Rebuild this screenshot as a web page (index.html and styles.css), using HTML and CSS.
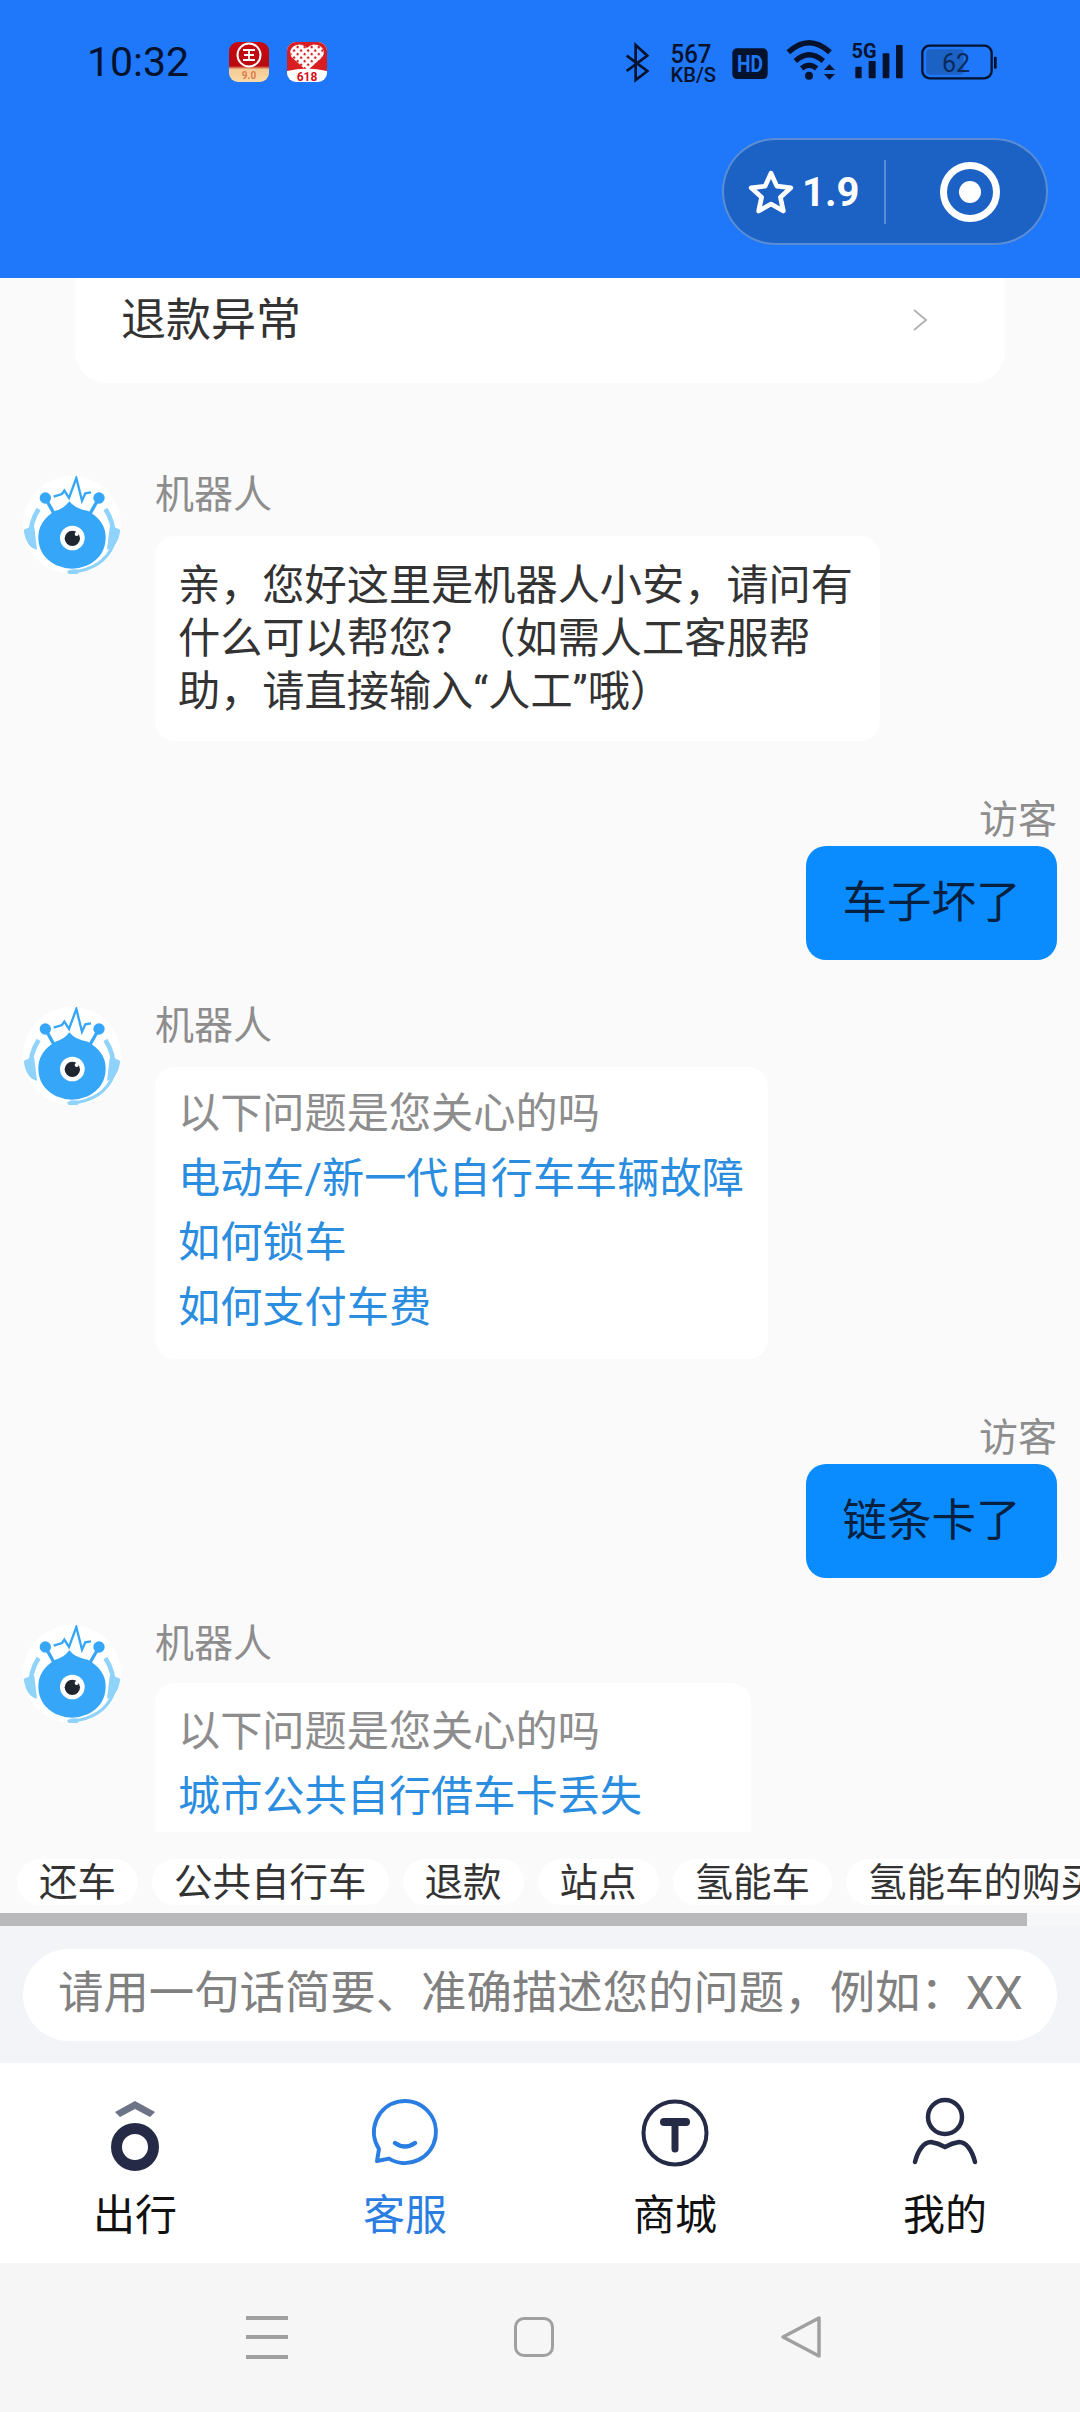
FILE: index.html
```html
<!DOCTYPE html>
<html lang="zh-CN">
<head>
    <meta charset="UTF-8">
    <title>客服</title>
    <link rel="stylesheet" href="styles.css">
</head>
<body>
<svg class="defs" width="0" height="0">
    <symbol id="bot" viewBox="68 106 294 294">
        <circle cx="215" cy="253" r="147" fill="#fff"/>
        <path d="M115 205Q88 245 90 300" fill="none" stroke="#8fd3fb" stroke-width="14"/>
        <path d="M70 268Q90 256 102 260L110 327Q78 322 70 268Z" fill="#8fd3fb"/>
        <path d="M315 205Q342 245 340 300" fill="none" stroke="#8fd3fb" stroke-width="14"/>
        <path d="M360 268Q340 256 328 260L320 327Q352 322 360 268Z" fill="#8fd3fb"/>
        <path d="M340 310Q310 385 215 394" fill="none" stroke="#8fd3fb" stroke-width="10"/>
        <path d="M200 392Q215 382 235 388L232 402H206Z" fill="#8fd3fb"/>
        <path d="M135 172L165 226M296 172L265 226" stroke="#36a6f8" stroke-width="10"/>
        <circle cx="135" cy="172" r="17" fill="#36a6f8"/>
        <circle cx="296" cy="172" r="17" fill="#36a6f8"/>
        <path d="M160 168L185 160L192 150L206 172L228 112L245 180L255 158L272 155" fill="none" stroke="#36a6f8" stroke-width="7"/>
        <path d="M207 182Q225 205 262 210Q316 240 316 290Q316 347 262 374Q215 394 168 374Q114 347 114 290Q114 240 165 210Q190 205 207 182Z" fill="#36a6f8"/>
        <circle cx="216" cy="292" r="37" fill="#fff"/>
        <circle cx="216" cy="293" r="23" fill="#20262f"/>
        <circle cx="229" cy="280" r="6" fill="#fff"/>
    </symbol>
</svg>

<div class="page">
    <header class="header">
        <div class="status">
            <span class="time">10:32</span>
            <svg class="app" viewBox="0 0 40 40" width="40" height="40">
                <defs>
                    <linearGradient id="icbc" x1="0" y1="0" x2="0" y2="1">
                        <stop offset="0" stop-color="#c8090f"/>
                        <stop offset=".6" stop-color="#b80a10"/>
                        <stop offset=".68" stop-color="#f5cb93"/>
                        <stop offset="1" stop-color="#f8d9a8"/>
                    </linearGradient>
                    <pattern id="pdd" width="5" height="5" patternUnits="userSpaceOnUse" patternTransform="rotate(45)">
                        <rect width="2.2" height="2.2" fill="#d91e22"/>
                    </pattern>
                </defs>
                <rect width="40" height="40" rx="9" fill="url(#icbc)"/>
                <circle cx="20" cy="13" r="11.5" fill="none" stroke="#fff" stroke-width="2"/>
                <path d="M14 8H26M20 8V18M15 13H25M14 18H26" stroke="#fff" stroke-width="1.8" fill="none"/>
                <text x="20" y="37" class="app-text" fill="#dd7a4c" font-size="10">9.0</text>
            </svg>
            <svg class="app app-last" viewBox="0 0 40 40" width="40" height="40">
                <rect width="40" height="40" rx="9" fill="#fff"/>
                <path d="M0 9A9 9 0 0 1 9 0H31A9 9 0 0 1 40 9V29Q20 24 0 29Z" fill="#d91e22"/>
                <path d="M20 29L4.5 15Q1 8 7 4Q14 0 20 6Q26 0 33 4Q39 8 35.5 15Z" fill="#fff"/>
                <path d="M20 29L4.5 15Q1 8 7 4Q14 0 20 6Q26 0 33 4Q39 8 35.5 15Z" fill="url(#pdd)"/>
                <text x="20" y="38.5" class="app-text" fill="#d3101c" font-size="12">618</text>
            </svg>
            <svg class="sys" viewBox="0 0 390 55" width="390" height="55">
                <g transform="scale(.33333)">
                    <path d="M20 62L82 108L47 135V30L82 62L20 108" fill="none" stroke="#04122e" stroke-width="8"/>
                    <rect x="337" y="40" width="106" height="92" rx="14" fill="#04122e"/>
                    <path d="M505 52Q567 -5 630 52M526 78Q567 40 610 78M545 100Q567 82 590 100" fill="none" stroke="#04122e" stroke-width="16"/>
                    <circle cx="567" cy="122" r="12" fill="#04122e"/>
                    <path d="M612 105L628 88L645 105ZM612 117H645L628 134Z" fill="#04122e"/>
                    <rect x="706" y="95" width="19" height="35" rx="3" fill="#04122e"/>
                    <rect x="746" y="78" width="21" height="52" rx="3" fill="#04122e"/>
                    <rect x="788" y="55" width="20" height="75" rx="3" fill="#04122e"/>
                    <rect x="828" y="30" width="20" height="100" rx="3" fill="#04122e"/>
                    <rect x="907" y="32" width="208" height="98" rx="22" fill="none" stroke="#04122e" stroke-width="7"/>
                    <rect x="919" y="43" width="112" height="76" rx="10" fill="#1b62c4"/>
                    <rect x="1122" y="65" width="8" height="36" rx="3" fill="#04122e"/>
                </g>
                <text x="50.5" y="28.3" class="sys-text" font-size="25" textLength="41" lengthAdjust="spacingAndGlyphs">567</text>
                <text x="50.5" y="46.7" class="sys-text" font-size="19.5" textLength="45.5" lengthAdjust="spacingAndGlyphs">KB/S</text>
                <text x="117" y="37" class="sys-text hd" font-size="23" textLength="26" lengthAdjust="spacingAndGlyphs">HD</text>
                <text x="231.5" y="23" class="sys-text bold" font-size="19.5" textLength="25" lengthAdjust="spacingAndGlyphs">5G</text>
                <text x="322" y="36.5" class="sys-text batt" font-size="25">62</text>
            </svg>
        </div>
        <div class="capsule">
            <div class="rate">
                <svg viewBox="0 0 44 42" width="46" height="44">
                    <path d="M22 3L27.6 15.4L41 16.9L31 26L33.8 39.2L22 32.5L10.2 39.2L13 26L3 16.9L16.4 15.4Z" fill="none" stroke="#fff" stroke-width="4.5" stroke-linejoin="round"/>
                </svg>
                <span>1.9</span>
            </div>
            <i class="capsule-line"></i>
            <svg class="capsule-dot" viewBox="0 0 60 60" width="60" height="60">
                <circle cx="30" cy="30" r="26.5" fill="none" stroke="#fff" stroke-width="7"/>
                <circle cx="30" cy="30" r="11" fill="#fff"/>
            </svg>
        </div>
    </header>

    <main class="chat">
        <div class="card">
            <span>退款异常</span>
            <svg viewBox="0 0 16 22" width="16" height="22">
                <path d="M2 1L14 11L2 21" fill="none" stroke="#b4b4b4" stroke-width="2"/>
            </svg>
        </div>

        <div class="msg">
            <svg class="avatar" width="98" height="98"><use href="#bot"/></svg>
            <div>
                <p class="name">机器人</p>
                <div class="bubble bubble-first">亲，您好这里是机器人小安，请问有什么可以帮您？（如需人工客服帮助，请直接输入“人工”哦）</div>
            </div>
        </div>

        <div class="msg-me">
            <p class="name">访客</p>
            <div class="bubble-me">车子坏了</div>
        </div>

        <div class="msg">
            <svg class="avatar" width="98" height="98"><use href="#bot"/></svg>
            <div>
                <p class="name">机器人</p>
                <div class="bubble bubble-list">
                    <p class="tip">以下问题是您关心的吗</p>
                    <a class="link">电动车/新一代自行车车辆故障</a>
                    <a class="link">如何锁车</a>
                    <a class="link">如何支付车费</a>
                </div>
            </div>
        </div>

        <div class="msg-me">
            <p class="name">访客</p>
            <div class="bubble-me">链条卡了</div>
        </div>

        <div class="msg">
            <svg class="avatar" width="98" height="98"><use href="#bot"/></svg>
            <div>
                <p class="name">机器人</p>
                <div class="bubble bubble-list bubble-last">
                    <p class="tip">以下问题是您关心的吗</p>
                    <a class="link">城市公共自行借车卡丢失</a>
                </div>
            </div>
        </div>
    </main>

    <div class="chips">
        <span class="chip">还车</span>
        <span class="chip">公共自行车</span>
        <span class="chip">退款</span>
        <span class="chip">站点</span>
        <span class="chip">氢能车</span>
        <span class="chip">氢能车的购买</span>
    </div>
    <div class="scroll"><i></i></div>

    <div class="input-wrap">
        <div class="input">请用一句话简要、准确描述您的问题，例如：XX</div>
    </div>

    <nav class="tabs">
        <div class="tab">
            <svg viewBox="0 0 80 80" width="80" height="80">
                <path d="M40 4L60 15L55 20L40 12L25 20L20 15Z" fill="#6e7487"/>
                <circle cx="40" cy="50" r="18.5" fill="none" stroke="#252b47" stroke-width="11"/>
            </svg>
            <span>出行</span>
        </div>
        <div class="tab on">
            <svg viewBox="0 0 80 80" width="80" height="80">
                <path d="M14 52A31 31 0 1 1 24 61.6L12 64Z" fill="none" stroke="#2a7de1" stroke-width="4" stroke-linejoin="round"/>
                <path d="M30 46Q40 53 50 46" fill="none" stroke="#2a7de1" stroke-width="4.5" stroke-linecap="round"/>
            </svg>
            <span>客服</span>
        </div>
        <div class="tab">
            <svg viewBox="0 0 80 80" width="80" height="80">
                <circle cx="40" cy="36" r="31.5" fill="none" stroke="#252b47" stroke-width="4"/>
                <path d="M29 25H51" fill="none" stroke="#252b47" stroke-width="8" stroke-linecap="round"/>
                <path d="M40 25V52" fill="none" stroke="#252b47" stroke-width="7" stroke-linecap="round"/>
            </svg>
            <span>商城</span>
        </div>
        <div class="tab">
            <svg viewBox="0 0 80 80" width="80" height="80">
                <circle cx="40" cy="20" r="17" fill="none" stroke="#252b47" stroke-width="4.5"/>
                <path d="M10 65C13 53 19 45 26 45Q33 46 40 50Q47 46 54 45C61 45 67 53 70 65" fill="none" stroke="#252b47" stroke-width="4.5" stroke-linecap="round"/>
            </svg>
            <span>我的</span>
        </div>
    </nav>

    <div class="navbar">
        <div class="nav-menu"><i></i><i></i><i></i></div>
        <i class="nav-home"></i>
        <svg viewBox="0 0 42 44" width="42" height="44">
            <path d="M39 3V41L3 22Z" fill="none" stroke="#a0a0a0" stroke-width="3.5" stroke-linejoin="round"/>
        </svg>
    </div>
</div>
</body>
</html>
```

FILE: styles.css
```css
* {
    box-sizing: border-box;
}

html, body {
    margin: 0;
    padding: 0;
}

p {
    margin: 0;
}

.defs {
    position: absolute;
}

.page {
    width: 1080px;
    height: 2412px;
    display: flex;
    flex-direction: column;
    overflow: hidden;
    font-family: Roboto, "Noto Sans CJK SC", sans-serif;
    background: #fafafb;
}

/* top */
.header {
    height: 278px;
    flex-shrink: 0;
    background: #1f77fa;
}

.status {
    height: 124px;
    padding: 0 70px 0 87px;
    display: flex;
    align-items: center;
}

.time {
    width: 142px;
    font-size: 41px;
    color: #04122e;
}

.app {
    margin-right: 18px;
}

.app-text {
    font-family: Roboto, sans-serif;
    font-weight: 700;
    text-anchor: middle;
}

.sys {
    margin-left: auto;
}

.sys-text {
    font-family: Roboto, sans-serif;
    font-weight: 500;
    fill: #04122e;
}

.sys-text.bold {
    font-weight: 700;
}

.sys-text.hd {
    font-weight: 700;
    fill: #1f77fa;
}

.sys-text.batt {
    font-weight: 400;
    fill: #0a2a5c;
}

.capsule {
    width: 326px;
    height: 107px;
    margin: 14px 32px 0 auto;
    display: flex;
    align-items: center;
    border: 2px solid rgba(255, 255, 255, .28);
    border-radius: 54px;
    background: #1b62c4;
}

.rate {
    width: 160px;
    padding-left: 24px;
    display: flex;
    align-items: center;
    font-size: 40px;
    font-weight: 700;
    color: #fff;
}

.rate span {
    margin: 2px 0 0 8px;
}

.capsule-line {
    width: 2px;
    height: 64px;
    background: rgba(255, 255, 255, .28);
}

.capsule-dot {
    margin-left: 54px;
}

/* chat */
.chat {
    height: 1554px;
    flex-shrink: 0;
    overflow: hidden;
}

.card {
    height: 105px;
    margin: 0 75px;
    padding: 0 77px 28px 46px;
    display: flex;
    align-items: center;
    justify-content: space-between;
    font-size: 45px;
    color: #333;
    background: #fff;
    border-radius: 0 0 32px 32px;
}

.card svg {
    margin-top: 6px;
}

.msg {
    margin: 47px 0 0 23px;
    display: flex;
}

.card + .msg {
    margin-top: 93px;
}

.avatar {
    flex-shrink: 0;
    margin-right: 34px;
}

.name {
    height: 38px;
    margin-bottom: 22px;
    font-size: 39px;
    line-height: 38px;
    color: #8d8d8d;
}

.bubble {
    max-width: 725px;
    padding: 23px 25px 23px 23px;
    font-size: 42.2px;
    line-height: 53px;
    color: #333;
    background: #fff;
    border-radius: 20px;
}

.bubble-list {
    width: fit-content;
    padding: 15px 24px 19px 23px;
    line-height: 64.5px;
}

.bubble-last {
    width: 596px;
    margin-top: -2px;
    padding-top: 17px;
}

.tip {
    color: #8d8d8d;
}

.link {
    display: block;
    color: #2a8de0;
}

.msg-me {
    margin: 60px 23px 0 0;
    display: flex;
    flex-direction: column;
    align-items: flex-end;
}

.msg-me .name {
    margin-bottom: 7px;
}

.bubble-me {
    padding: 30px 36.5px;
    font-size: 44.5px;
    line-height: 54px;
    color: #06203f;
    background: #0a8cff;
    border-radius: 20px;
}

/* quick words */
.chips {
    height: 81px;
    flex-shrink: 0;
    padding: 27px 0 0 17px;
    display: flex;
    gap: 14px;
    overflow: hidden;
}

.chip {
    height: 46px;
    flex-shrink: 0;
    padding: 0 22px;
    font-size: 38.5px;
    line-height: 48px;
    color: #333;
    white-space: nowrap;
    background: #fff;
    border-radius: 23px;
}

.scroll {
    height: 13px;
    flex-shrink: 0;
    background: #f6f7f9;
}

.scroll i {
    display: block;
    width: 1027px;
    height: 13px;
    background: #b9b9bb;
}

.input-wrap {
    height: 137px;
    flex-shrink: 0;
    padding: 23px 23px 0;
    background: #f2f4f7;
}

.input {
    height: 92px;
    padding: 0 30px 0 35px;
    font-size: 45.4px;
    line-height: 90px;
    color: #808080;
    white-space: nowrap;
    overflow: hidden;
    background: #fff;
    border-radius: 46px;
}

/* bottom */
.tabs {
    height: 200px;
    flex-shrink: 0;
    padding-top: 34px;
    display: flex;
    background: #fff;
}

.tab {
    flex: 1;
    display: flex;
    flex-direction: column;
    align-items: center;
    font-size: 42px;
    line-height: 50px;
    color: #111;
}

.tab span {
    margin-top: 14px;
}

.tab.on {
    color: #2a7de1;
}

.navbar {
    flex: 1;
    padding: 0 258px 1px 246px;
    display: flex;
    align-items: center;
    justify-content: space-between;
    background: #f6f6f6;
}

.nav-menu {
    width: 42px;
    height: 43px;
    display: flex;
    flex-direction: column;
    justify-content: space-between;
}

.nav-menu i {
    height: 4px;
    background: #a0a0a0;
}

.nav-home {
    width: 40px;
    height: 40px;
    border: 3.5px solid #a0a0a0;
    border-radius: 10px;
}
```
